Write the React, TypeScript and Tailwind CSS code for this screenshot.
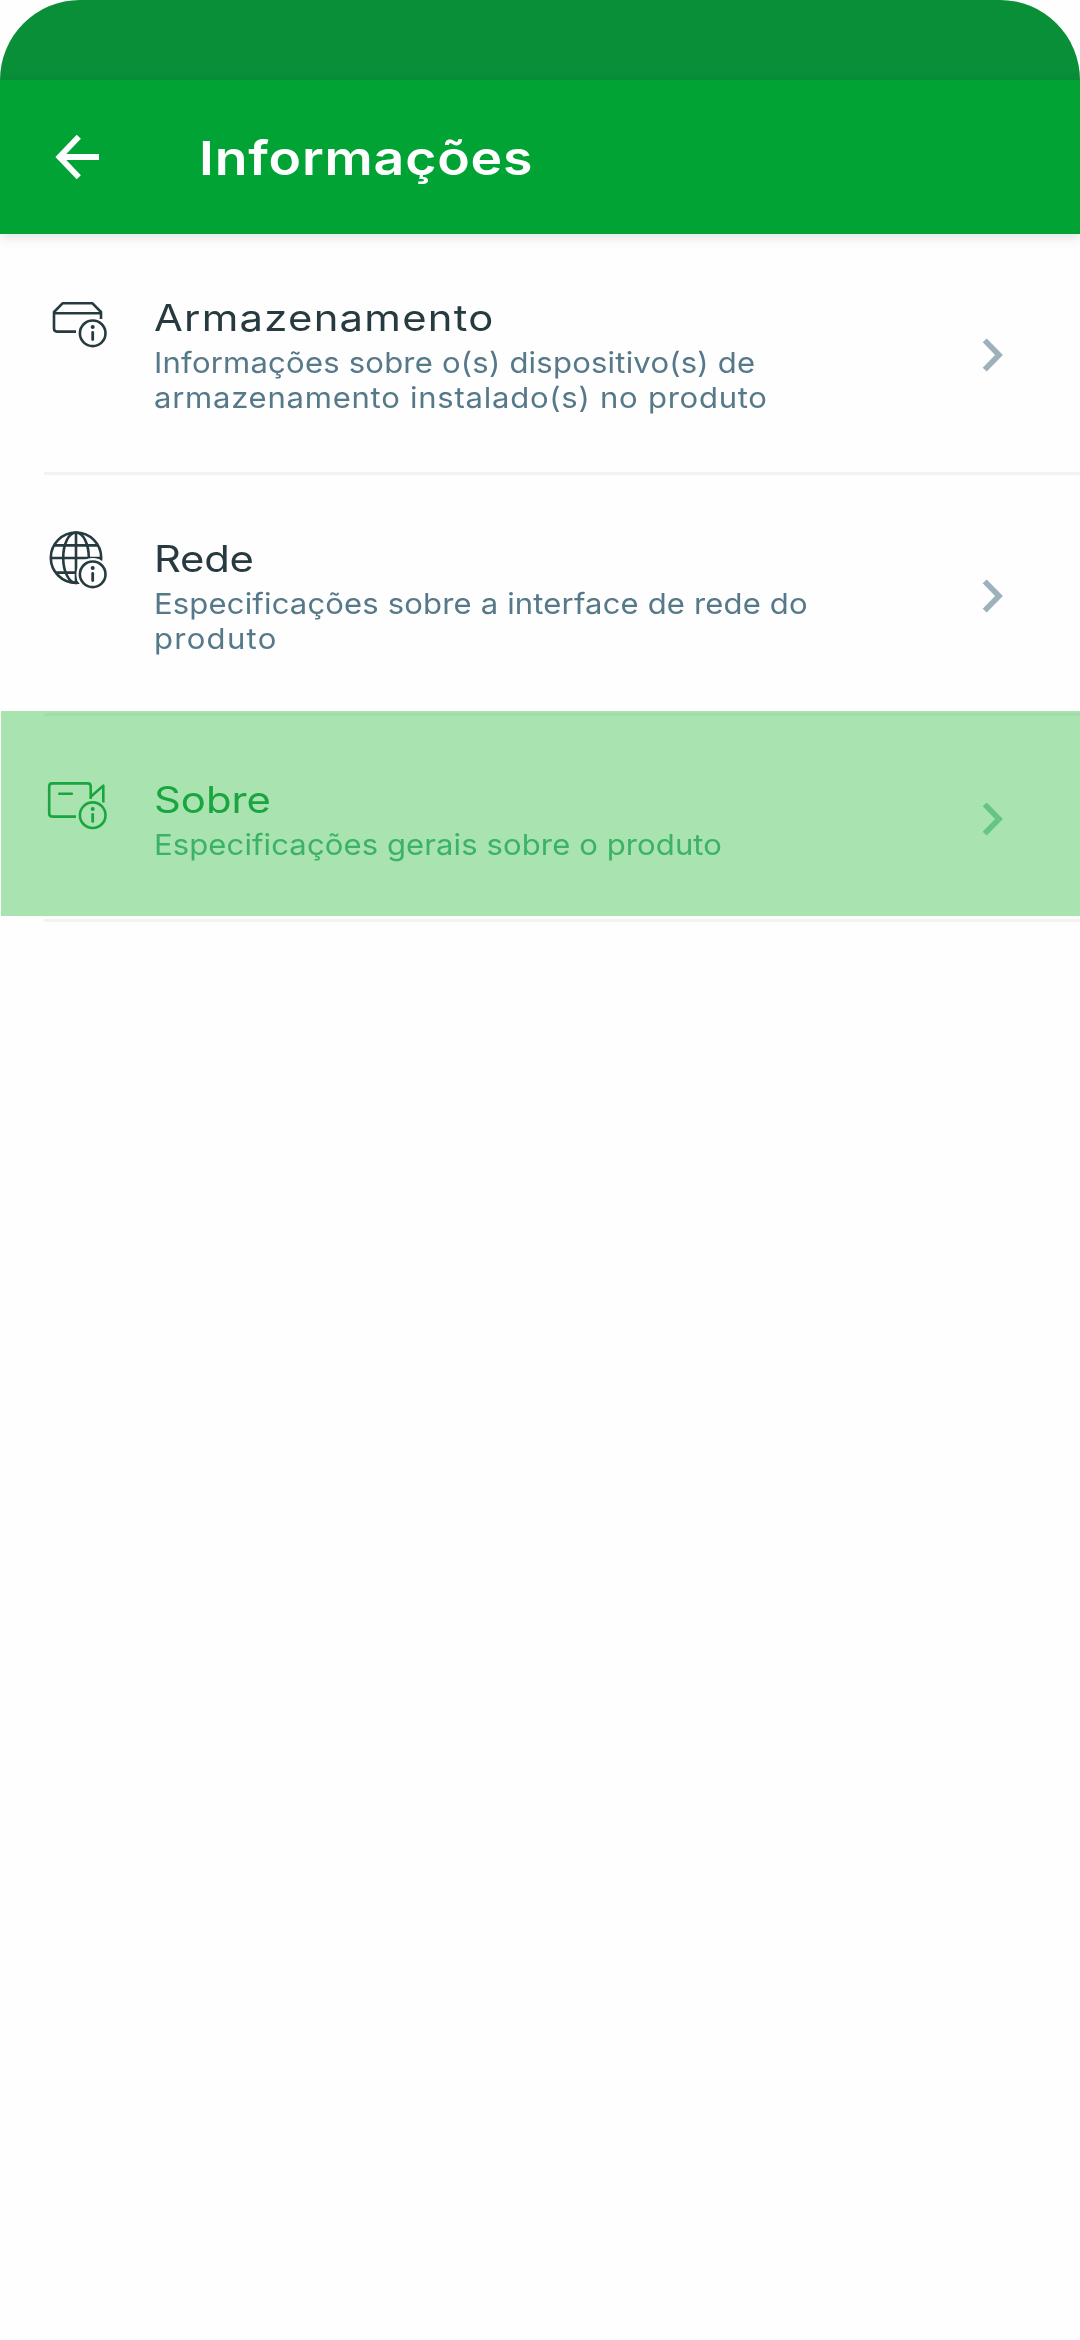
import React from "react";

type IconProps = { className?: string };

function InfoBadge({ cy }: { cy: number }) {
  return (
    <>
      <circle cx="62.7" cy={cy} r="12.8" />
      <circle cx="62.7" cy={cy - 6.2} r="2" fill="currentColor" stroke="none" />
      <path d={`M62.7 ${cy - 0.8}v7`} strokeWidth="2.8" strokeLinecap="round" />
    </>
  );
}

function StorageIcon({ className }: IconProps) {
  return (
    <svg viewBox="0 0 100 90" className={className} fill="none" stroke="currentColor" strokeWidth="2.6" strokeLinejoin="round">
      <path d="M46 51.6H27Q24 51.6 24 48.6V32L32.5 23.3H62.5L71 32V39M24 33.2H71" />
      <InfoBadge cy={53.3} />
    </svg>
  );
}

function GlobeIcon({ className }: IconProps) {
  return (
    <svg viewBox="0 11 100 90" className={className} fill="none" stroke="currentColor" strokeWidth="2.6">
      <defs>
        <mask id="badge-gap" maskUnits="userSpaceOnUse" x="0" y="0" width="100" height="101">
          <rect width="100" height="101" fill="white" stroke="none" />
          <circle cx="62.7" cy="64.3" r="16.3" fill="black" stroke="none" />
        </mask>
      </defs>
      <g mask="url(#badge-gap)">
        <circle cx="46" cy="47.7" r="25.2" />
        <ellipse cx="46" cy="47.7" rx="12.8" ry="25.2" />
        <path d="M46 22.5V73M20.8 48H71.2M24.5 35.4H67.5M25.5 62.6H66" />
      </g>
      <InfoBadge cy={64.3} />
    </svg>
  );
}

function CameraIcon({ className }: IconProps) {
  return (
    <svg viewBox="0 2 100 90" className={className} fill="none" stroke="currentColor" strokeWidth="2.6" strokeLinejoin="round">
      <path d="M46 56.6H22.2Q19.2 56.6 19.2 53.6V26.4Q19.2 23.4 22.2 23.4H57.7Q60.7 23.4 60.7 26.4V39M61 36.5L73.3 25.6V42.5" />
      <path d="M29.3 33.7H41.8" strokeLinecap="round" />
      <InfoBadge cy={55.2} />
    </svg>
  );
}

type Label = { text: string; tracking: string };

type Item = {
  title: Label;
  lines: Label[];
  Icon: (p: IconProps) => React.ReactElement;
  active?: boolean;
};

const items: Item[] = [
  {
    title: { text: "Armazenamento", tracking: "tracking-[1.1px]" },
    lines: [
      { text: "Informações sobre o(s) dispositivo(s) de", tracking: "tracking-[0.2px]" },
      { text: "armazenamento instalado(s) no produto", tracking: "tracking-[0.7px]" },
    ],
    Icon: StorageIcon,
  },
  {
    title: { text: "Rede", tracking: "tracking-[-0.2px]" },
    lines: [
      { text: "Especificações sobre a interface de rede do", tracking: "tracking-[0.15px]" },
      { text: "produto", tracking: "tracking-[1.2px]" },
    ],
    Icon: GlobeIcon,
  },
  {
    title: { text: "Sobre", tracking: "tracking-[0px]" },
    lines: [{ text: "Especificações gerais sobre o produto", tracking: "tracking-[0.1px]" }],
    Icon: CameraIcon,
    active: true,
  },
];

function Row({ title, lines, Icon, active }: Item) {
  return (
    <li className={active ? "relative flex h-[206px] pl-[30px]" : "relative flex h-[241px] pl-[30px]"}>
      {active && (
        <div className="absolute -top-[5px] left-px right-0 h-[205px] bg-[#a9e3af]">
          <div className="ml-[43px] mt-[2px] h-[3px] bg-[#a2dca8]" />
        </div>
      )}
      <Icon className={`relative mt-[46px] h-[90px] w-[100px] shrink-0 ${active ? "text-[#1aa540]" : "text-[#263a40]"}`} />
      <div className="relative ml-6 grow pt-[61px]">
        <h2
          className={`origin-left scale-x-[1.13] whitespace-nowrap text-[37px] leading-[46px] ${title.tracking} ${
            active ? "text-[#1aa540]" : "text-[#263a40]"
          }`}
        >
          {title.text}
        </h2>
        <p
          className={`mt-1 origin-left scale-x-[1.07] whitespace-nowrap text-[29px] leading-[35px] ${
            active ? "text-[#3cb268]" : "text-[#56798a]"
          }`}
        >
          {lines.map((line) => (
            <span key={line.text} className={`block ${line.tracking}`}>
              {line.text}
            </span>
          ))}
        </p>
      </div>
      <svg
        viewBox="0 0 24 36"
        className={`relative mr-[75px] h-9 w-6 shrink-0 self-center ${active ? "text-[#66c488]" : "text-[#9db1bc]"}`}
        fill="none"
        stroke="currentColor"
        strokeWidth="5.6"
      >
        <path d="M3.7 3.4L18 18L3.7 32.6" />
      </svg>
      <div className="absolute bottom-0 left-[44px] right-0 h-[3px] bg-[#f1f3f3]" />
    </li>
  );
}

export default function App() {
  return (
    <div className="min-h-[2340px] w-[1080px] bg-[#fefefe] font-['Inter',sans-serif]">
      <div className="h-20 rounded-t-[80px] bg-[#098f38]" />
      <header className="relative flex h-[154px] items-center bg-[#02a335] pl-[52px] shadow-[0_3px_12px_rgba(0,0,0,0.12)]">
        <svg viewBox="0 0 50 50" className="size-[50px] text-white" fill="none" stroke="currentColor" strokeWidth="5.8">
          <path d="M26.8 4.8L7.4 25L26.8 45.2M7.4 25H47" />
        </svg>
        <h1 className="ml-[97px] mt-px origin-left scale-x-[1.14] text-[47px] font-semibold leading-[60px] tracking-[0.7px] text-white">
          Informações
        </h1>
      </header>
      <ul>
        {items.map((item) => (
          <Row key={item.title.text} {...item} />
        ))}
      </ul>
    </div>
  );
}
